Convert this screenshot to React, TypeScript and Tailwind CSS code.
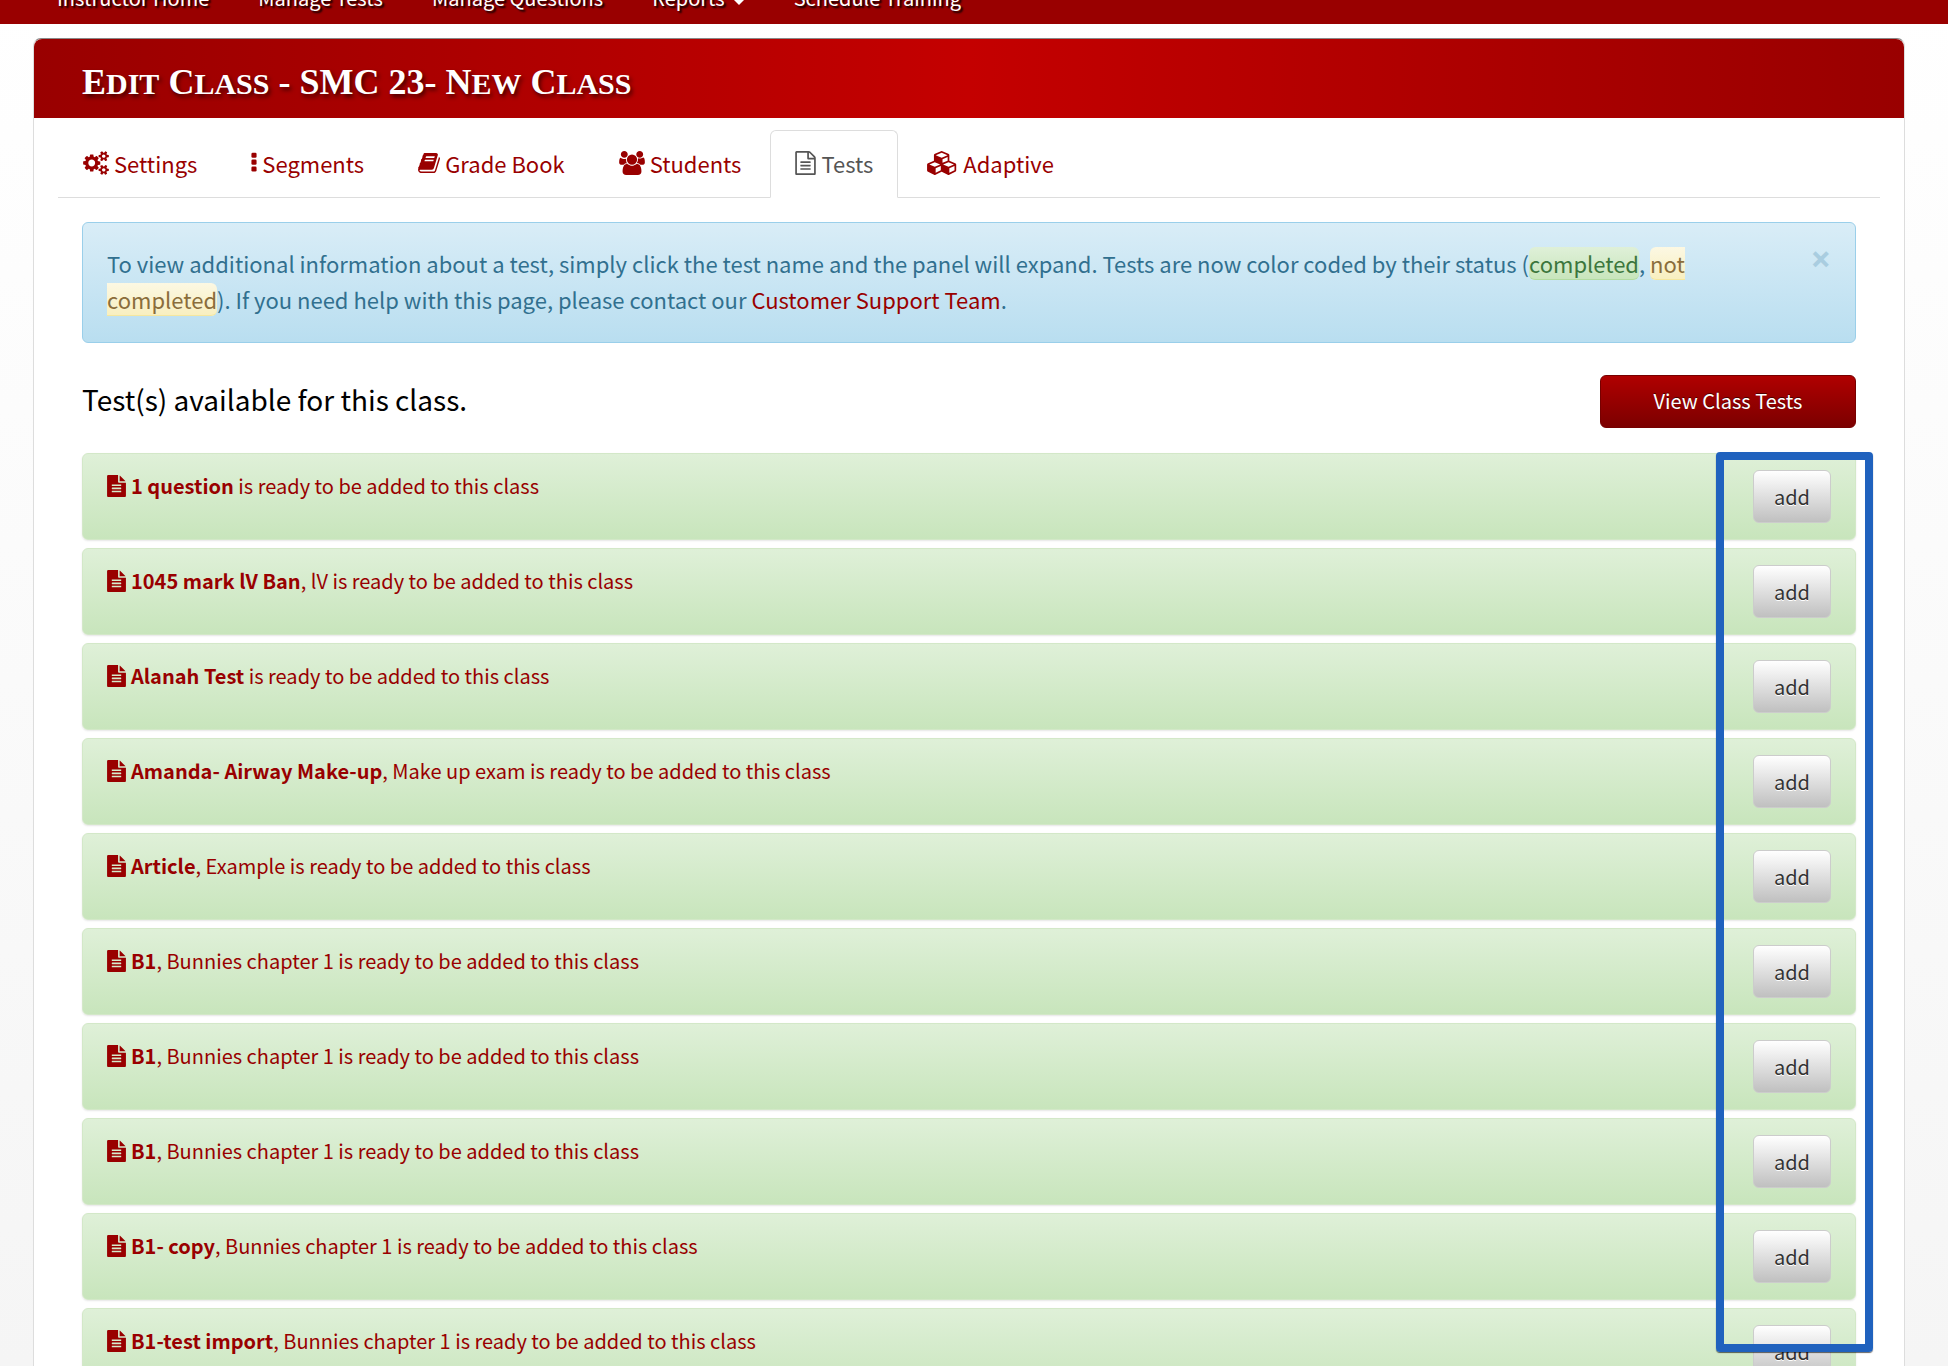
import React from 'react';
import { clsx } from 'clsx';

type IconProps = { className?: string };

const GearsIcon = ({ className }: IconProps) => (
  <svg viewBox="0 0 1920 1792" fill="currentColor" className={className} aria-hidden="true">
    <path d="M896 896q0-106-75-181t-181-75-181 75-75 181 75 181 181 75 181-75 75-181zm768 512q0-52-38-90t-90-38-90 38-38 90q0 53 37.5 90.5t90.5 37.5 90.5-37.5 37.5-90.5zm0-1024q0-52-38-90t-90-38-90 38-38 90q0 53 37.5 90.5t90.5 37.5 90.5-37.5 37.5-90.5zm-384 421v185q0 10-7 19.5t-16 10.5l-155 24q-11 35-32 76 34 48 90 115 7 11 7 20 0 12-7 19-23 30-82.5 89.5t-78.5 59.5q-11 0-21-7l-115-90q-37 19-77 31-11 108-23 155-7 24-30 24h-186q-11 0-20-7.5t-10-17.5l-23-153q-34-10-75-31l-118 89q-7 7-20 7-11 0-21-8-144-133-144-160 0-9 7-19 10-14 41-53t47-61q-23-44-35-82l-152-24q-10-1-17-9.5t-7-19.5v-185q0-10 7-19.5t16-10.5l155-24q11-35 32-76-34-48-90-115-7-11-7-20 0-12 7-20 22-30 82-89t79-59q11 0 21 7l115 90q34-18 77-32 11-108 23-154 7-24 30-24h186q11 0 20 7.5t10 17.5l23 153q34 10 75 31l118-89q8-7 20-7 11 0 21 8 144 133 144 160 0 8-7 19-12 16-42 54t-45 60q23 48 34 82l152 23q10 2 17 10.5t7 19.5zm640 533v140q0 16-149 31-12 27-30 52 51 113 51 138 0 4-4 7-122 71-124 71-8 0-46-47t-52-68q-20 2-30 2t-30-2q-14 21-52 68t-46 47q-2 0-124-71-4-3-4-7 0-25 51-138-18-25-30-52-149-15-149-31v-140q0-16 149-31 13-29 30-52-51-113-51-138 0-4 4-7 4-2 35-20t59-34 30-16q8 0 46 46.5t52 67.5q20-2 30-2t30 2q51-71 92-112l6-2q4 0 124 70 4 3 4 7 0 25-51 138 17 23 30 52 149 15 149 31zm0-1024v140q0 16-149 31-12 27-30 52 51 113 51 138 0 4-4 7-122 71-124 71-8 0-46-47t-52-68q-20 2-30 2t-30-2q-14 21-52 68t-46 47q-2 0-124-71-4-3-4-7 0-25 51-138-18-25-30-52-149-15-149-31v-140q0-16 149-31 13-29 30-52-51-113-51-138 0-4 4-7 4-2 35-20t59-34 30-16q8 0 46 46.5t52 67.5q20-2 30-2t30 2q51-71 92-112l6-2q4 0 124 70 4 3 4 7 0 25-51 138 17 23 30 52 149 15 149 31z" />
  </svg>
);

const DotsIcon = ({ className }: IconProps) => (
  <svg viewBox="0 0 384 1792" fill="currentColor" className={className} aria-hidden="true">
    <rect y="128" width="384" height="384" rx="96" />
    <rect y="640" width="384" height="384" rx="96" />
    <rect y="1152" width="384" height="384" rx="96" />
  </svg>
);

const BookIcon = ({ className }: IconProps) => (
  <svg viewBox="60 0 1672 1792" fill="currentColor" className={className} aria-hidden="true">
    <path d="M1703 478q40 57 18 129l-275 906q-19 64-76.5 107.5t-122.5 43.5h-923q-77 0-148.5-53.5t-99.5-131.5q-24-67-2-127 0-4 3-27t4-37q1-8-3-21.5t-3-19.5q2-11 8-21t16.5-23.5 16.5-23.5q23-38 45-91.5t30-91.5q3-10 .5-30t-.5-28q3-11 17-28t17-23q21-36 42-92t25-90q1-9-2.5-32t.5-28q4-13 22-30.5t22-22.5q19-26 42.5-84.5t27.5-96.5q1-8-3-25.5t-2-26.5q2-8 9-18t18-23 17-21q8-12 16.5-30.5t15-35 16-36 19.5-32 26.5-23.5 36-11.5 47.5 5.5l-1 3q38-9 51-9h761q74 0 114 56t18 130l-274 906q-36 119-71.5 153.5t-128.5 34.5h-869q-27 0-38 15-11 16-1 43 24 70 144 70h923q29 0 56-15.5t35-41.5l300-987q7-22 5-57 38 15 59 43zm-1064 2q-4 13 2 22.5t20 9.5h608q13 0 25.5-9.5t16.5-22.5l21-64q4-13-2-22.5t-20-9.5h-608q-13 0-25.5 9.5t-16.5 22.5zm-83 256q-4 13 2 22.5t20 9.5h608q13 0 25.5-9.5t16.5-22.5l21-64q4-13-2-22.5t-20-9.5h-608q-13 0-25.5 9.5t-16.5 22.5z" />
  </svg>
);

const UsersIcon = ({ className }: IconProps) => (
  <svg viewBox="64 0 1920 1792" fill="currentColor" className={className} aria-hidden="true">
    <path d="M657 896q-162 5-265 128h-134q-82 0-138-40.5t-56-118.5q0-353 124-353 6 0 43.5 21t97.5 42.5 119 21.5q67 0 133-23-5 37-5 66 0 159 81 286zm1071 637q0 120-73 189.5t-194 69.5h-874q-121 0-194-69.5t-73-189.5q0-53 3.5-103.5t14-109 26.5-108.5 43-97.5 62-81 85.5-53.5 111.5-20q10 0 43 21.5t73 48 107 48 135 21.5 135-21.5 107-48 73-48 43-21.5q61 0 111.5 20t85.5 53.5 62 81 43 97.5 26.5 108.5 14 109 3.5 103.5zm-1024-1277q0 106-75 181t-181 75-181-75-75-181 75-181 181-75 181 75 75 181zm704 384q0 159-112.5 271.5t-271.5 112.5-271.5-112.5-112.5-271.5 112.5-271.5 271.5-112.5 271.5 112.5 112.5 271.5zm576 225q0 78-56 118.5t-138 40.5h-134q-103-123-265-128 81-127 81-286 0-29-5-66 66 23 133 23 59 0 119-21.5t97.5-42.5 43.5-21q124 0 124 353zm-128-609q0 106-75 181t-181 75-181-75-75-181 75-181 181-75 181 75 75 181z" />
  </svg>
);

const FileOutlineIcon = ({ className }: IconProps) => (
  <svg viewBox="128 0 1536 1792" fill="currentColor" className={className} aria-hidden="true">
    <path d="M1596 380q28 28 48 76t20 88v1152q0 40-28 68t-68 28h-1344q-40 0-68-28t-28-68v-1600q0-40 28-68t68-28h896q40 0 88 20t76 48zm-444-244v376h376q-10-29-22-41l-313-313q-12-12-41-22zm384 1528v-1024h-416q-40 0-68-28t-28-68v-416h-768v1536h1280zm-1024-864q0-14 9-23t23-9h704q14 0 23 9t9 23v64q0 14-9 23t-23 9h-704q-14 0-23-9t-9-23v-64zm736 224q14 0 23 9t9 23v64q0 14-9 23t-23 9h-704q-14 0-23-9t-9-23v-64q0-14 9-23t23-9h704zm0 256q14 0 23 9t9 23v64q0 14-9 23t-23 9h-704q-14 0-23-9t-9-23v-64q0-14 9-23t23-9h704z" />
  </svg>
);

const FileIcon = ({ className }: IconProps) => (
  <svg viewBox="128 0 1536 1792" fill="currentColor" className={className} aria-hidden="true">
    <path d="M1596 476q14 14 28 36h-472v-472q22 14 36 28zm-476 164h544v1056q0 40-28 68t-68 28h-1344q-40 0-68-28t-28-68v-1600q0-40 28-68t68-28h800v544q0 40 28 68t68 28zm160 736v-64q0-14-9-23t-23-9h-704q-14 0-23 9t-9 23v64q0 14 9 23t23 9h704q14 0 23-9t9-23zm0-256v-64q0-14-9-23t-23-9h-704q-14 0-23 9t-9 23v64q0 14 9 23t23 9h704q14 0 23-9t9-23zm0-256v-64q0-14-9-23t-23-9h-704q-14 0-23 9t-9 23v64q0 14 9 23t23 9h704q14 0 23-9t9-23z" />
  </svg>
);

const CubesIcon = ({ className }: IconProps) => (
  <svg viewBox="0 0 2304 1792" fill="currentColor" className={className} aria-hidden="true">
    <path d="M640 1632l384-192v-314l-384 164v342zm-64-454l404-173-404-173-404 173zm1088 454l384-192v-314l-384 164v342zm-64-454l404-173-404-173-404 173zm-448-293l384-165v-266l-384 164v267zm-64-379l441-189-441-189-441 189zm1088 518v416q0 36-19 67t-52 47l-448 224q-25 14-57 14t-57-14l-448-224q-4-2-7-4-2 2-7 4l-448 224q-25 14-57 14t-57-14l-448-224q-33-16-52-47t-19-67v-416q0-38 21.5-70t56.5-48l434-186v-400q0-38 21.5-70t56.5-48l448-192q23-10 50-10t50 10l448 192q35 16 56.5 48t21.5 70v400l434 186q36 16 57 48t21 70z" />
  </svg>
);

const navItems = [
  { label: 'Instructor Home' },
  { label: 'Manage Tests' },
  { label: 'Manage Questions' },
  { label: 'Reports', menu: true },
  { label: 'Schedule Training' },
];

const tabs = [
  { label: 'Settings', Icon: GearsIcon, size: 'w-[26px]' },
  { label: 'Segments', Icon: DotsIcon, size: 'w-[6px]' },
  { label: 'Grade Book', Icon: BookIcon, size: 'w-[22px]' },
  { label: 'Students', Icon: UsersIcon, size: 'w-[26px]' },
  { label: 'Tests', Icon: FileOutlineIcon, size: 'w-[21px]', active: true },
  { label: 'Adaptive', Icon: CubesIcon, size: 'w-[31px]' },
];

const tests = [
  { name: '1 question' },
  { name: '1045 mark lV Ban', description: 'lV' },
  { name: 'Alanah Test' },
  { name: 'Amanda- Airway Make-up', description: 'Make up exam' },
  { name: 'Article', description: 'Example' },
  { name: 'B1', description: 'Bunnies chapter 1' },
  { name: 'B1', description: 'Bunnies chapter 1' },
  { name: 'B1', description: 'Bunnies chapter 1' },
  { name: 'B1- copy', description: 'Bunnies chapter 1' },
  { name: 'B1-test import', description: 'Bunnies chapter 1' },
];

function NavBar() {
  return (
    <nav className="flex h-6 items-end gap-[49px] overflow-hidden bg-[#990000] pl-[57px] text-xl leading-7 text-white [text-shadow:2px_2px_2px_#000]">
      {navItems.map((item) => (
        <a key={item.label} href="#" className="flex items-center gap-2 pb-3">
          {item.label}
          {item.menu && <span className="mt-2 border-x-[6px] border-t-[6px] border-x-transparent border-t-white" />}
        </a>
      ))}
    </nav>
  );
}

// Capitalised words get a large initial and smaller capitals after it
function PageTitle({ text }: { text: string }) {
  return (
    <h1 className="pt-1.5 font-['Liberation_Serif',serif] text-4xl font-bold text-white [text-shadow:2px_3px_4px_rgba(0,0,0,0.6)]">
      {text.split(' ').map((word, index) => (
        <React.Fragment key={index}>
          {index > 0 && ' '}
          <span
            className={clsx(
              'inline-block',
              /[a-z]/.test(word) && 'text-3xl uppercase first-letter:text-4xl'
            )}
          >
            {word}
          </span>
        </React.Fragment>
      ))}
    </h1>
  );
}

function Tabs() {
  return (
    <div className="mx-6 mt-3 flex gap-1 border-b border-[#dddddd]">
      {tabs.map(({ label, Icon, size, active }) => (
        <a
          key={label}
          href="#"
          className={clsx(
            '-mb-px flex h-[68px] items-center gap-[5px] rounded-t-md border px-6 pb-0.5 text-[22px] leading-9',
            active ? 'border-[#dddddd] border-b-white bg-white text-[#555555]' : 'border-transparent text-[#990000]'
          )}
        >
          <Icon className={clsx('h-6 shrink-0', size)} />
          {label}
        </a>
      ))}
    </div>
  );
}

function InfoAlert() {
  return (
    <div className="flex items-start justify-between rounded-md border border-[#9acfea] bg-linear-to-b from-[#d9edf7] to-[#b9def0] px-6 pt-[22px] pb-[25px] text-[#31708f]">
      <p className="max-w-[1620px] text-[22px] leading-9">
        To view additional information about a test, simply click the test name and the panel will expand. Tests are
        now color coded by their status (
        <span className="rounded-md border-b border-[#b2dba1] bg-linear-to-b from-[#dff0d8] to-[#c8e5bc] text-[#3c763d]">
          completed
        </span>
        ,{' '}
        <span className="rounded-md border-b border-[#f5e79e] bg-linear-to-b from-[#fcf8e3] to-[#f8efc0] text-[#8a6d3b]">
          not completed
        </span>
        ). If you need help with this page, please contact our{' '}
        <a href="#" className="text-[#990000]">
          Customer Support Team
        </a>
        .
      </p>
      <button
        type="button"
        aria-label="Close"
        className="font-['Open_Sans',sans-serif] text-4xl leading-7 font-bold text-[#a9cde0]"
      >
        ×
      </button>
    </div>
  );
}

function TestRow({ name, description }: { name: string; description?: string }) {
  return (
    <li className="flex h-[87px] items-start justify-between rounded-md border border-[#d3e8c8] bg-linear-to-b from-[#dff0d8] to-[#c8e5bc] px-6 py-4 shadow-[0_1px_2px_rgba(0,0,0,0.1)]">
      <a href="#" className="flex items-center gap-[5px] text-xl leading-8 text-[#990000]">
        <FileIcon className="h-[22px] w-[19px] shrink-0" />
        <span>
          <strong>{name}</strong>
          {description && `, ${description}`} is ready to be added to this class
        </span>
      </a>
      <button
        type="button"
        className="h-[53px] rounded-md border border-[#cccccc] bg-linear-to-b from-white to-[#c0c0c0] px-5 text-xl text-[#333333] [text-shadow:0_1px_0_#fff]"
      >
        add
      </button>
    </li>
  );
}

export default function App() {
  return (
    <div className="h-screen overflow-hidden bg-linear-to-b from-white to-[#f5f5f5] font-['Noto_Sans_CJK_SC','Noto_Sans',sans-serif]">
      <NavBar />
      <main className="mt-3.5 mr-[43px] ml-[33px] rounded-t-lg border border-[#dddddd] border-t-[#888888] bg-white">
        <header className="flex h-[79px] items-center rounded-t-lg bg-linear-to-r from-[#990000] via-[#c40000] to-[#990000] px-12">
          <PageTitle text="Edit Class - SMC 23- New Class" />
        </header>
        <Tabs />
        <div className="px-12 pt-6">
          <InfoAlert />
          <div className="mt-8 flex items-center justify-between">
            <h2 className="pb-1 text-[28px] leading-[49px] text-black">Test(s) available for this class.</h2>
            <button
              type="button"
              className="h-[53px] w-64 rounded-md border border-[#770000] bg-linear-to-b from-[#b00000] to-[#7c0000] pb-0.5 text-xl text-white [text-shadow:0_-1px_0_rgba(0,0,0,0.5)]"
            >
              View Class Tests
            </button>
          </div>
          <div className="relative mt-[25px]">
            <ul className="flex flex-col gap-2">
              {tests.map((test, index) => (
                <TestRow key={index} {...test} />
              ))}
            </ul>
            {/* Highlight around the add buttons */}
            <div className="pointer-events-none absolute -top-px -right-[17px] h-[900px] w-[157px] rounded-sm border-8 border-[#2062be] shadow-[0_1px_1px_rgba(0,0,0,0.6)]" />
          </div>
        </div>
      </main>
    </div>
  );
}
